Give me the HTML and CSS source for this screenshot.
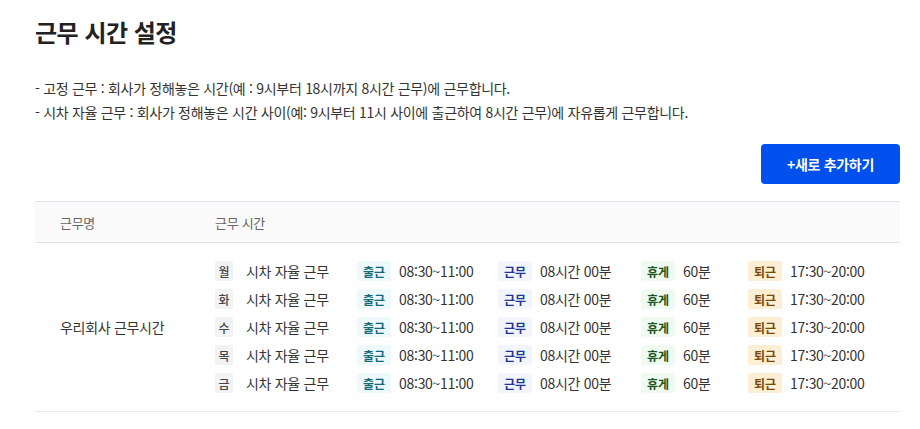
FILE: index.html
```html
<!DOCTYPE html>
<html lang="ko">
  <head>
    <meta charset="UTF-8" />
    <meta name="viewport" content="width=device-width, initial-scale=1.0" />
    <title>근무 시간 설정</title>
    <link rel="stylesheet" href="styles.css">
  </head>
  <body>
    <div class="container">
      <h1>근무 시간 설정</h1>

      <ul class="guide">
        <li>- 고정 근무 : 회사가 정해놓은 시간(예 : 9시부터 18시까지 8시간 근무)에 근무합니다.</li>
        <li>- 시차 자율 근무 : 회사가 정해놓은 시간 사이(예: 9시부터 11시 사이에 출근하여 8시간 근무)에 자유롭게 근무합니다.</li>
      </ul>

      <div class="actions">
        <button type="button" class="add-btn">+새로 추가하기</button>
      </div>

      <table class="schedule">
        <thead>
          <tr>
            <th class="col-name">근무명</th>
            <th>근무 시간</th>
          </tr>
        </thead>
        <tbody>
          <tr>
            <td class="col-name">우리회사 근무시간</td>
            <td>
              <div class="days">
                <div class="day-row">
                  <div class="cell"><span class="tag day">월</span>시차 자율 근무</div>
                  <div class="cell"><span class="tag in">출근</span>08:30~11:00</div>
                  <div class="cell"><span class="tag work">근무</span>08시간 00분</div>
                  <div class="cell"><span class="tag rest">휴게</span>60분</div>
                  <div class="cell"><span class="tag out">퇴근</span>17:30~20:00</div>
                </div>
                <div class="day-row">
                  <div class="cell"><span class="tag day">화</span>시차 자율 근무</div>
                  <div class="cell"><span class="tag in">출근</span>08:30~11:00</div>
                  <div class="cell"><span class="tag work">근무</span>08시간 00분</div>
                  <div class="cell"><span class="tag rest">휴게</span>60분</div>
                  <div class="cell"><span class="tag out">퇴근</span>17:30~20:00</div>
                </div>
                <div class="day-row">
                  <div class="cell"><span class="tag day">수</span>시차 자율 근무</div>
                  <div class="cell"><span class="tag in">출근</span>08:30~11:00</div>
                  <div class="cell"><span class="tag work">근무</span>08시간 00분</div>
                  <div class="cell"><span class="tag rest">휴게</span>60분</div>
                  <div class="cell"><span class="tag out">퇴근</span>17:30~20:00</div>
                </div>
                <div class="day-row">
                  <div class="cell"><span class="tag day">목</span>시차 자율 근무</div>
                  <div class="cell"><span class="tag in">출근</span>08:30~11:00</div>
                  <div class="cell"><span class="tag work">근무</span>08시간 00분</div>
                  <div class="cell"><span class="tag rest">휴게</span>60분</div>
                  <div class="cell"><span class="tag out">퇴근</span>17:30~20:00</div>
                </div>
                <div class="day-row">
                  <div class="cell"><span class="tag day">금</span>시차 자율 근무</div>
                  <div class="cell"><span class="tag in">출근</span>08:30~11:00</div>
                  <div class="cell"><span class="tag work">근무</span>08시간 00분</div>
                  <div class="cell"><span class="tag rest">휴게</span>60분</div>
                  <div class="cell"><span class="tag out">퇴근</span>17:30~20:00</div>
                </div>
              </div>
            </td>
          </tr>
        </tbody>
      </table>
    </div>
  </body>
</html>
```

FILE: styles.css
```css
* {
  box-sizing: border-box;
  margin: 0;
  padding: 0;
}

body {
  background-color: #fff;
  color: #333;
  font-family: "Noto Sans CJK KR", "Noto Sans", sans-serif;
  font-size: 14px;
  letter-spacing: -0.3px;
}

.container {
  padding: 14px 20px 0 35px;
}

h1 {
  font-size: 24px;
  font-weight: 700;
  line-height: 36px;
  color: #222;
  letter-spacing: -0.5px;
}

.guide {
  list-style: none;
  margin-top: 26px;
  line-height: 24px;
}

.actions {
  display: flex;
  justify-content: flex-end;
  margin-top: 20px;
}

.add-btn {
  width: 139px;
  height: 40px;
  border: none;
  border-radius: 4px;
  background-color: #0050ee;
  color: #fff;
  font-family: inherit;
  font-size: 14px;
  font-weight: 700;
  letter-spacing: -0.3px;
  cursor: pointer;
}

.schedule {
  width: 100%;
  margin-top: 17px;
  border-collapse: collapse;
  text-align: left;
}

.schedule thead tr {
  background-color: #fafafa;
  border-top: 1px solid #e2e4e8;
  border-bottom: 1px solid #e2e4e8;
}

.schedule th {
  height: 41px;
  font-size: 13px;
  font-weight: 400;
  color: #666;
}

.schedule tbody tr {
  border-bottom: 1px solid #e8e9ec;
}

.schedule td {
  padding: 14px 0 14px;
  vertical-align: middle;
}

.schedule .col-name {
  width: 180px;
  padding-left: 25px;
}

.day-row {
  display: grid;
  grid-template-columns: 142px 141px 143px 107px auto;
  height: 28px;
  align-items: center;
}

.cell {
  display: flex;
  align-items: center;
  white-space: nowrap;
}

.tag {
  display: inline-flex;
  align-items: center;
  justify-content: center;
  height: 20px;
  padding: 0 6px;
  margin-right: 8px;
  border-radius: 2px;
  font-size: 12px;
  font-weight: 700;
  letter-spacing: 0;
}

.tag.day {
  width: 18px;
  padding: 0;
  margin-right: 13px;
  background-color: #f1f2f4;
  color: #444;
  font-weight: 500;
}

.tag.in {
  background-color: #eef9fc;
  color: #136a7e;
}

.tag.work {
  background-color: #f2f4fe;
  color: #1b3597;
}

.tag.rest {
  background-color: #effaf0;
  color: #18551c;
}

.tag.out {
  background-color: #fcefd4;
  color: #76490c;
}
```
